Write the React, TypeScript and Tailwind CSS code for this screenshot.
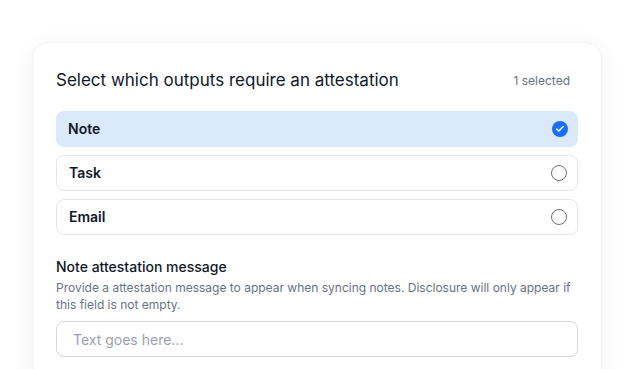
import { Check } from 'lucide-react'

const options = [
  { label: 'Note', selected: true },
  { label: 'Task', selected: false },
  { label: 'Email', selected: false },
]

export default function App() {
  return (
    <div className="h-[369px] w-[634px] overflow-hidden bg-white pl-8 pt-[42px] font-['Inter',sans-serif]">
      <div className="h-[360px] w-[570px] rounded-2xl border border-gray-100 bg-white px-[23px] pt-6 shadow-[0_4px_24px_rgba(0,0,0,0.06)]">
        <div className="flex h-7 items-center justify-between">
          <h2 className="text-[17px] font-normal text-gray-900">Select which outputs require an attestation</h2>
          <span className="pr-2 text-xs text-gray-500">1 selected</span>
        </div>

        <div className="mt-4 space-y-2">
          {options.map(opt => (
            <div
              key={opt.label}
              className={`flex h-9 items-center justify-between rounded-lg pl-3 pr-[10px] ${
                opt.selected ? 'bg-[#dbe9fd]' : 'border border-gray-200 bg-white'
              }`}
            >
              <span className="text-sm font-semibold text-gray-900">{opt.label}</span>
              {opt.selected ? (
                <span className="flex h-4 w-4 items-center justify-center rounded-full bg-[#1a6ef5]">
                  <Check className="h-2.5 w-2.5 text-white" strokeWidth={3.5} />
                </span>
              ) : (
                <span className="h-4 w-4 rounded-full border-[1.5px] border-gray-500" />
              )}
            </div>
          ))}
        </div>

        <div className="mt-[22px]">
          <p className="text-sm font-medium text-gray-900">Note attestation message</p>
          <p className="mt-0.5 text-xs leading-[17px] text-gray-500">
            Provide a attestation message to appear when syncing notes. Disclosure will only appear if this field is not empty.
          </p>
          <input
            placeholder="Text goes here..."
            className="mt-2 h-9 w-full rounded-lg border border-gray-300 px-4 text-sm text-gray-900 placeholder:text-gray-400 focus:outline-none"
          />
        </div>
      </div>
    </div>
  )
}
